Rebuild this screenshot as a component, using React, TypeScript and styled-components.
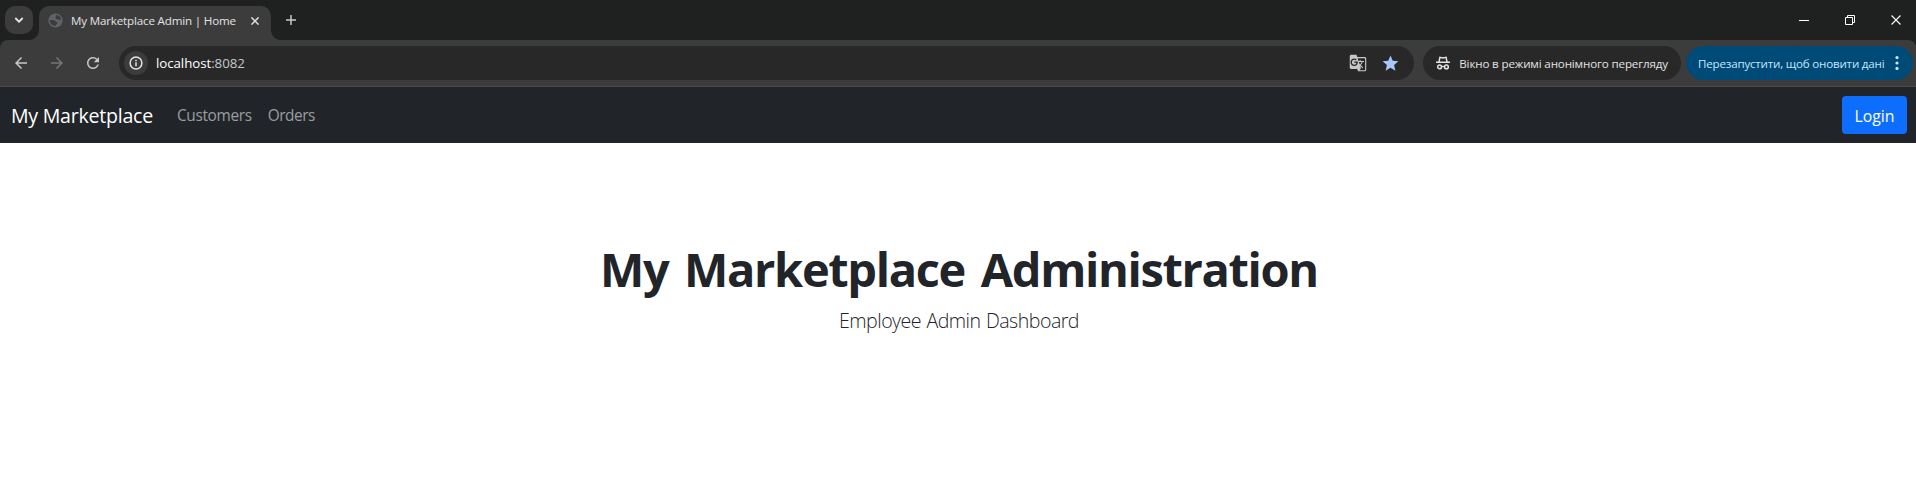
import React from "react";
import styled, { createGlobalStyle } from "styled-components";
import { MdArrowBack, MdArrowForward, MdRefresh, MdStar, MdGTranslate } from "react-icons/md";

const GlobalStyle = createGlobalStyle`
  *, *::before, *::after { box-sizing: border-box; }
  body {
    margin: 0;
    background: #fff;
    font-family: "Open Sans", "Noto Sans", sans-serif;
  }
  svg { display: block; flex: none; }
`;

const Label = styled.span<{ $size: number; $spacing?: number; $color?: string }>`
  font-size: ${(p) => p.$size}px;
  letter-spacing: ${(p) => p.$spacing ?? 0}px;
  color: ${(p) => p.$color ?? "inherit"};
  white-space: nowrap;
`;

const TabStrip = styled.header`
  display: flex;
  height: 40px;
  padding: 6px 0 0 5px;
  background: #1f2120;
`;

const TabSearch = styled.button`
  display: grid;
  place-items: center;
  width: 28px;
  height: 28px;
  padding: 0;
  border: 0;
  border-radius: 10px;
  background: #3c3c3c;
  color: #e3e3e3;
`;

const Tab = styled.div`
  position: relative;
  display: flex;
  align-items: center;
  width: 232px;
  height: 34px;
  margin-left: 6px;
  padding: 0 12px 5px 9px;
  border-radius: 10px 10px 0 0;
  background: #3c3c3c;
  color: #e3e3e3;

  &::before,
  &::after {
    content: "";
    position: absolute;
    bottom: 0;
    width: 10px;
    height: 10px;
  }
  &::before {
    right: 100%;
    background: radial-gradient(circle at 0 0, transparent 9.5px, #3c3c3c 10.5px);
  }
  &::after {
    left: 100%;
    background: radial-gradient(circle at 100% 0, transparent 9.5px, #3c3c3c 10.5px);
  }
`;

const TabTitle = styled(Label)`
  flex: 1;
  margin-left: 8px;
`;

const NewTab = styled.button`
  display: grid;
  place-items: center;
  width: 28px;
  height: 28px;
  margin-left: 6px;
  padding: 0;
  border: 0;
  background: none;
  color: #c7c7c7;
`;

const WindowControls = styled.div`
  display: flex;
  margin: -6px -3px 0 auto;
  color: #fff;
`;

const WindowButton = styled.button`
  display: grid;
  place-items: center;
  width: 46px;
  height: 40px;
  padding: 0;
  border: 0;
  background: none;
  color: inherit;
`;

const ToolbarBack = styled.div`
  background: #1f2120;
`;

const Toolbar = styled.div`
  display: flex;
  align-items: center;
  height: 47px;
  padding: 0 3px 0 12px;
  border-bottom: 1px solid #4a4a4a;
  border-radius: 8px 8px 0 0;
  background: #3c3c3c;
`;

const NavButtons = styled.div`
  display: flex;
  gap: 18px;
  width: 107px;
  color: #c7c7c7;
`;

const AddressBar = styled.div`
  display: flex;
  align-items: center;
  flex: 1;
  height: 34px;
  padding: 0 14px 0 5px;
  border-radius: 17px;
  background: #282828;
`;

const SiteInfo = styled.span`
  display: grid;
  place-items: center;
  width: 24px;
  height: 24px;
  margin-right: 8px;
  border-radius: 50%;
  background: #3c3c3c;
  color: #e3e3e3;
`;

const Url = styled(Label)`
  flex: 1;
  color: #fff;
`;

const Port = styled.span`
  color: #c7c7c7;
`;

const AddressActions = styled.div`
  display: flex;
  align-items: center;
  gap: 14px;
  color: #c7c7c7;
`;

const Chip = styled.div<{ $tone: "incognito" | "update" }>`
  display: flex;
  align-items: center;
  justify-content: space-between;
  height: 34px;
  border-radius: 17px;
  width: ${(p) => (p.$tone === "update" ? 227 : 258)}px;
  margin-left: ${(p) => (p.$tone === "update" ? 5 : 9)}px;
  padding: ${(p) => (p.$tone === "update" ? "0 14px 0 12px" : "0 13px 0 12px")};
  background: ${(p) => (p.$tone === "update" ? "#004a77" : "#282828")};
  color: ${(p) => (p.$tone === "update" ? "#c2e7ff" : "#e3e3e3")};
`;

const Navbar = styled.nav`
  display: flex;
  align-items: center;
  height: 56px;
  padding: 0 9px 0 11px;
  background: #212529;
`;

const Brand = styled(Label)`
  width: 166px;
  padding-top: 1px;
`;

const NavLinks = styled.div`
  display: flex;
  gap: 16px;
  flex: 1;
  padding-top: 1px;
`;

const LoginButton = styled.button`
  display: grid;
  place-items: center;
  width: 65px;
  height: 38px;
  padding: 1px 0 0;
  border: 0;
  border-radius: 4px;
  background: #0d6efd;
  color: #fff;
  font-family: inherit;
`;

const Hero = styled.main`
  padding: 98px 0 0 2px;
  text-align: center;
  color: #212529;
`;

const Title = styled.h1`
  margin: 0 0 7px;
  font-size: 47px;
  font-weight: 700;
  line-height: 57.6px;
  letter-spacing: -1.35px;
  word-spacing: 4.8px;
`;

const Lead = styled.p`
  margin: 0;
  font-size: 19.6px;
  font-weight: 300;
  line-height: 30px;
  letter-spacing: -0.52px;
  word-spacing: 0.8px;
`;

const ChevronIcon = () => (
  <svg width="10" height="6" viewBox="0 0 10 6" fill="none" stroke="currentColor" strokeWidth="1.9">
    <path d="M1.3 1 5 4.6 8.7 1" />
  </svg>
);

const GlobeIcon = () => (
  <svg width="15" height="15" viewBox="0 0 15 15">
    <circle cx="7.5" cy="7.5" r="7.1" fill="#5f6368" />
    <path
      d="M8.4 1.900C9.800 1.900 11.300 2.700 12.200 4.100c.5.8.8 1.700.9 2.600-1 .3-1.900.4-2.700-.1-.8-.5-1.500-.3-2.300-.7-.8-.5-.6-1.400-.3-2.100.2-.7.1-1.300.6-1.900z"
      fill="#3c3c3c"
    />
    <path
      d="M1.800 7c1.500 0 3.300-.2 4.700.4 1 .4 1.300 1.400 2.300 1.600 1 .3 1 1.300.2 1.800-.8.5-1.400 1-1.500 2.300C4.400 13 1.900 10.400 1.800 7z"
      fill="#3c3c3c"
    />
  </svg>
);

const CrossIcon = ({ size, weight }: { size: number; weight: number }) => (
  <svg width={size} height={size} viewBox="0 0 10 10" stroke="currentColor" strokeWidth={weight}>
    <path d="M.5.5l9 9M9.500.5l-9 9" />
  </svg>
);

const PlusIcon = () => (
  <svg width="10" height="10" viewBox="0 0 10 10" stroke="currentColor" strokeWidth="1.5">
    <path d="M5 0v10M0 5h10" />
  </svg>
);

const MinimizeIcon = () => (
  <svg width="10" height="10" viewBox="0 0 10 10" stroke="currentColor">
    <path d="M0 5.500h10" />
  </svg>
);

const RestoreIcon = () => (
  <svg width="10" height="10" viewBox="0 0 10 10" fill="none" stroke="currentColor">
    <path d="M.5 2.500h7v7h-7zM2.500 2.500v-2h7v7h-2" />
  </svg>
);

const InfoIcon = () => (
  <svg width="14" height="14" viewBox="0 0 14 14" fill="none" stroke="currentColor" strokeWidth="1.5">
    <circle cx="7" cy="7" r="5.900" />
    <path d="M7 6.300v4M7 3.700v1.500" />
  </svg>
);

const IncognitoIcon = () => (
  <svg width="16" height="14" viewBox="0 0 16 14" fill="none" stroke="currentColor" strokeWidth="1.500">
    <path d="M1 6.300h14M3.900 6.300 4.900 1.300l3.100.7 3.100-.7 1 5" />
    <circle cx="4.600" cy="10.900" r="1.900" />
    <circle cx="11.400" cy="10.900" r="1.900" />
    <path d="M6.500 10.700q1.500-.8 3 0" strokeWidth="1.200" />
  </svg>
);

const MenuIcon = () => (
  <svg width="4" height="16" viewBox="0 0 4 16" fill="currentColor">
    <circle cx="2" cy="2.600" r="1.600" />
    <circle cx="2" cy="8" r="1.600" />
    <circle cx="2" cy="13.400" r="1.600" />
  </svg>
);

export default function App() {
  return (
    <>
      <GlobalStyle />
      <TabStrip>
        <TabSearch aria-label="Search tabs">
          <ChevronIcon />
        </TabSearch>
        <Tab>
          <GlobeIcon />
          <TabTitle $size={11.6} $spacing={-0.17}>My Marketplace Admin | Home</TabTitle>
          <CrossIcon size={8} weight={1.8} />
        </Tab>
        <NewTab aria-label="New tab">
          <PlusIcon />
        </NewTab>
        <WindowControls>
          <WindowButton aria-label="Minimize"><MinimizeIcon /></WindowButton>
          <WindowButton aria-label="Restore"><RestoreIcon /></WindowButton>
          <WindowButton aria-label="Close"><CrossIcon size={10} weight={1.1} /></WindowButton>
        </WindowControls>
      </TabStrip>

      <ToolbarBack>
        <Toolbar>
          <NavButtons>
            <MdArrowBack size={18} />
            <MdArrowForward size={18} color="#757575" />
            <MdRefresh size={18} />
          </NavButtons>
          <AddressBar>
            <SiteInfo><InfoIcon /></SiteInfo>
            <Url $size={13.3} $spacing={-0.06}>localhost<Port>:8082</Port></Url>
            <AddressActions>
              <MdGTranslate size={18} />
              <MdStar size={19} color="#a8c7fa" />
            </AddressActions>
          </AddressBar>
          <Chip $tone="incognito">
            <IncognitoIcon />
            <Label $size={11.6} $spacing={-0.15}>Вікно в режимі анонімного перегляду</Label>
          </Chip>
          <Chip $tone="update">
            <Label $size={11.6} $spacing={-0.2}>Перезапустити, щоб оновити дані</Label>
            <MenuIcon />
          </Chip>
        </Toolbar>
      </ToolbarBack>

      <Navbar>
        <Brand $size={19.6} $spacing={-0.26} $color="#fff">My Marketplace</Brand>
        <NavLinks>
          <Label $size={15.4} $spacing={-0.34} $color="#9b9d9f">Customers</Label>
          <Label $size={15.4} $spacing={-0.45} $color="#9b9d9f">Orders</Label>
        </NavLinks>
        <LoginButton>
          <Label $size={15.8} $spacing={0}>Login</Label>
        </LoginButton>
      </Navbar>

      <Hero>
        <Title>My Marketplace Administration</Title>
        <Lead>Employee Admin Dashboard</Lead>
      </Hero>
    </>
  );
}
